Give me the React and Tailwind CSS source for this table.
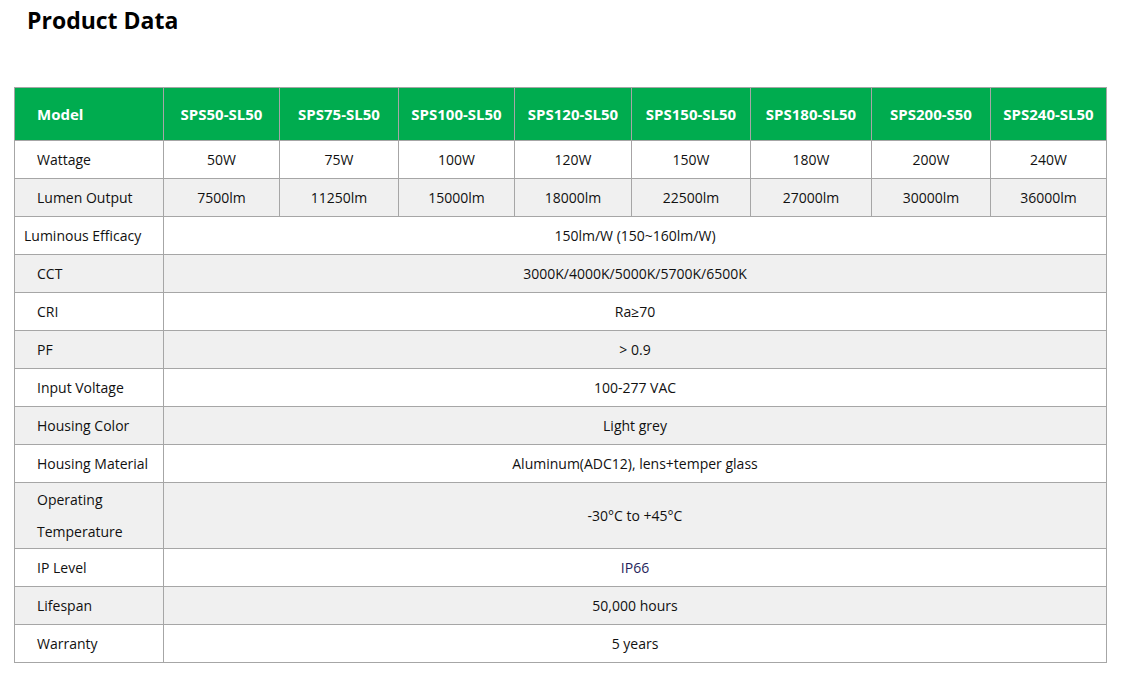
const models = ['SPS50-SL50', 'SPS75-SL50', 'SPS100-SL50', 'SPS120-SL50', 'SPS150-SL50', 'SPS180-SL50', 'SPS200-S50', 'SPS240-SL50'];
const colWidths = [149, 116, 119, 116, 117, 119, 121, 119, 116];

const wattage = ['50W', '75W', '100W', '120W', '150W', '180W', '200W', '240W'];
const lumens = ['7500lm', '11250lm', '15000lm', '18000lm', '22500lm', '27000lm', '30000lm', '36000lm'];

const specs = [
  { label: 'Luminous Efficacy', value: '150lm/W (150~160lm/W)', tight: true },
  { label: 'CCT', value: '3000K/4000K/5000K/5700K/6500K' },
  { label: 'CRI', value: 'Ra≥70' },
  { label: 'PF', value: '> 0.9' },
  { label: 'Input Voltage', value: '100-277 VAC' },
  { label: 'Housing Color', value: 'Light grey' },
  { label: 'Housing Material', value: 'Aluminum(ADC12), lens+temper glass' },
  { label: 'Operating Temperature', value: '-30°C to +45°C', tall: true },
  { label: 'IP Level', value: 'IP66', navy: true },
  { label: 'Lifespan', value: '50,000 hours' },
  { label: 'Warranty', value: '5 years' },
];

export default function App() {
  return (
    <div className="min-h-screen bg-white text-[#111]" style={{ fontFamily: '"Open Sans", sans-serif' }}>
      <h1 className="pl-[27px] pt-[4px] text-[23px] font-bold leading-[32px] text-black">Product Data</h1>

      <div className="pl-[14px] pt-[51px]">
        <table className="border-collapse table-fixed w-[1092px] text-[14px]">
          <colgroup>
            {colWidths.map((w, i) => (
              <col key={i} style={{ width: w }} />
            ))}
          </colgroup>
          <thead>
            <tr className="h-[53px] bg-[#00ac4f] text-white font-bold text-[15px]">
              <th className="border border-[#a6a6a6] text-left pl-[22px] font-bold">Model</th>
              {models.map((m) => (
                <th key={m} className="border border-[#a6a6a6] text-center font-bold whitespace-nowrap">{m}</th>
              ))}
            </tr>
          </thead>
          <tbody>
            <tr className="h-[38px] bg-white">
              <td className="border border-[#a6a6a6] pl-[22px]">Wattage</td>
              {wattage.map((w) => (
                <td key={w} className="border border-[#a6a6a6] text-center">{w}</td>
              ))}
            </tr>
            <tr className="h-[38px] bg-[#f0f0f0]">
              <td className="border border-[#a6a6a6] pl-[22px]">Lumen Output</td>
              {lumens.map((l) => (
                <td key={l} className="border border-[#a6a6a6] text-center">{l}</td>
              ))}
            </tr>
            {specs.map((s, i) => (
              <tr
                key={s.label}
                className={`${s.tall ? 'h-[66px]' : 'h-[38px]'} ${i % 2 === 0 ? 'bg-white' : 'bg-[#f0f0f0]'}`}
              >
                <td
                  className={`border border-[#a6a6a6] ${s.tight ? 'pl-[9px] whitespace-nowrap' : 'pl-[22px]'} ${s.tall ? 'leading-[32px]' : ''}`}
                >
                  {s.tall ? (
                    <>
                      Operating
                      <br />
                      Temperature
                    </>
                  ) : (
                    s.label
                  )}
                </td>
                <td colSpan={8} className={`border border-[#a6a6a6] text-center ${s.navy ? 'text-[#1f1f5c]' : ''}`}>
                  {s.value}
                </td>
              </tr>
            ))}
          </tbody>
        </table>
      </div>
    </div>
  );
}
